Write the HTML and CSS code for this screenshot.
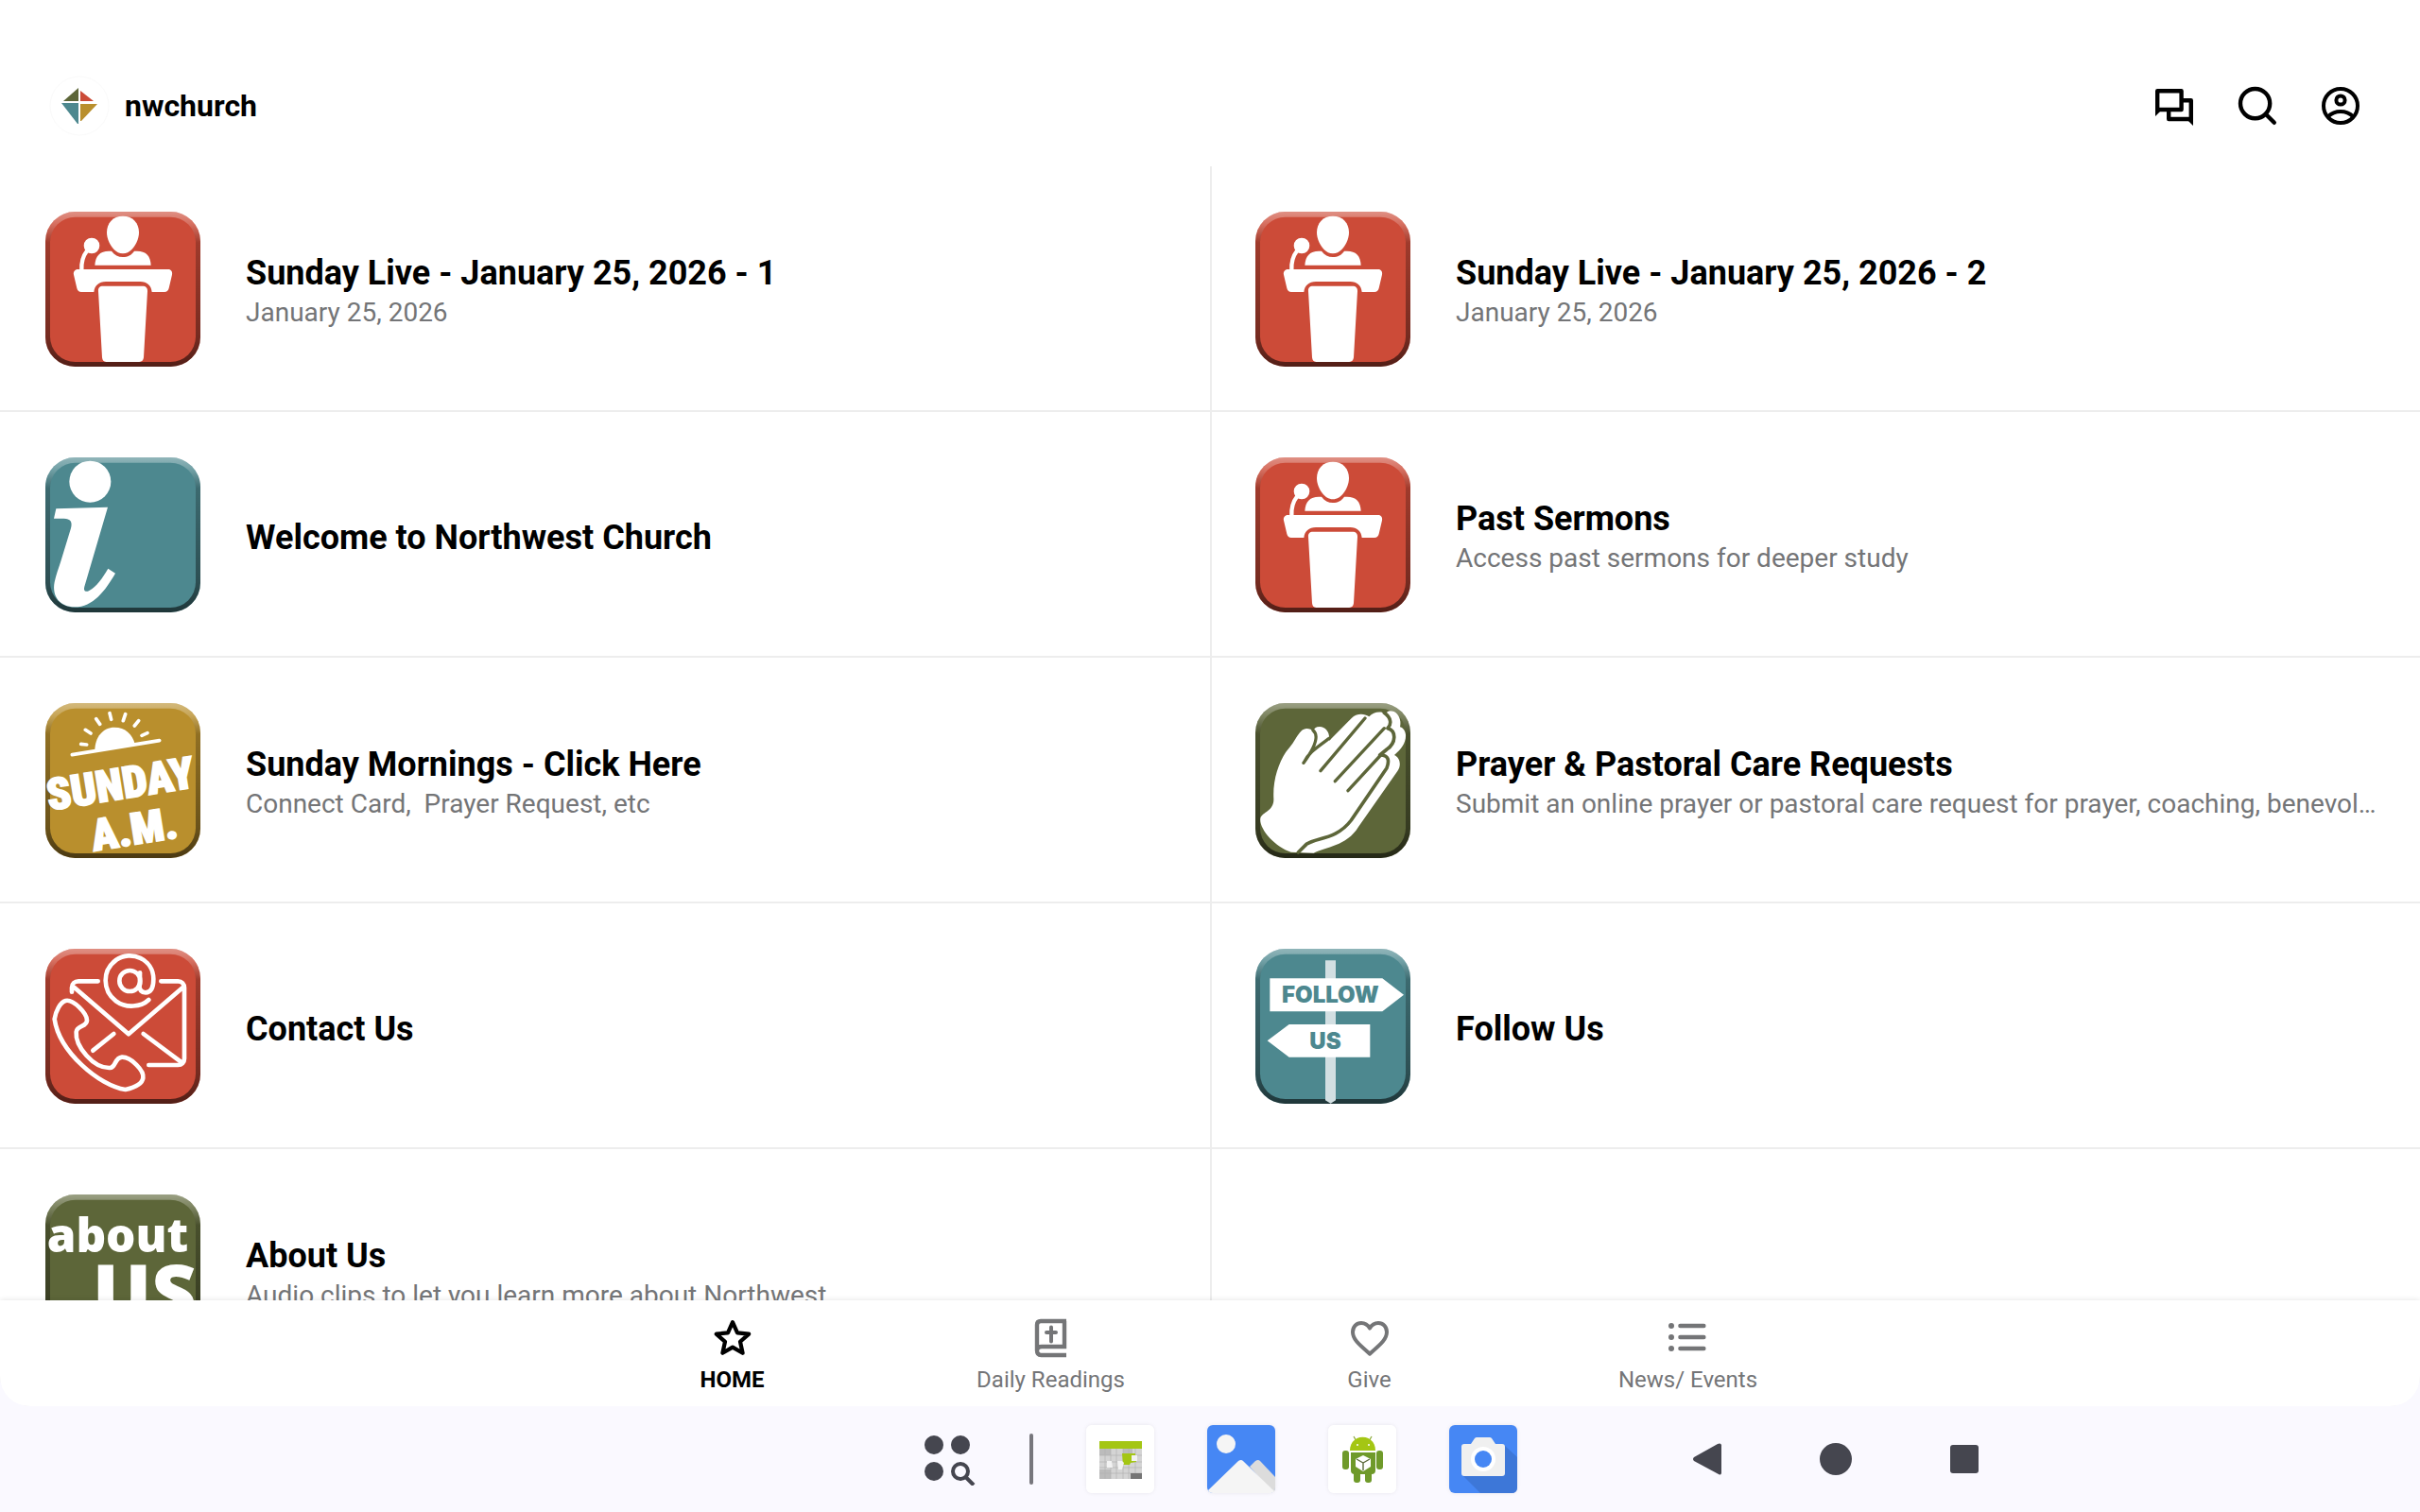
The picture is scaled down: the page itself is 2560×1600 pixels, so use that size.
FILE: index.html
```html
<!DOCTYPE html>
<html lang="en">
<head>
    <meta charset="UTF-8">
    <meta name="viewport" content="width=device-width, initial-scale=1.0">
    <title>nwchurch</title>
    <link rel="stylesheet" href="styles.css">
</head>
<body>
    <!-- Shared icon artwork -->
    <svg class="sprite" aria-hidden="true">
        <defs>
            <linearGradient id="bevel" x1="0" y1="0" x2="0" y2="1">
                <stop offset="0" stop-color="#fff" stop-opacity=".38"/>
                <stop offset=".08" stop-color="#fff" stop-opacity=".2"/>
                <stop offset=".2" stop-color="#000" stop-opacity=".22"/>
                <stop offset=".8" stop-color="#000" stop-opacity=".42"/>
                <stop offset="1" stop-color="#000" stop-opacity=".6"/>
            </linearGradient>
        </defs>
        <symbol id="tile" viewBox="0 0 492 492">
            <rect width="492" height="492" rx="94" fill="currentColor"/>
            <rect width="492" height="492" rx="94" fill="url(#bevel)"/>
            <rect x="15" y="17" width="462" height="460" rx="80" fill="currentColor"/>
        </symbol>
        <symbol id="podium" viewBox="54 72 492 492">
            <g fill="#fff">
                <path d="M300 86c32 0 51 22 51 52 0 28-22 67-51 67s-51-39-51-67c0-30 19-52 51-52z"/>
                <path d="M211 242c2-31 17-45 44-45h9c9 13 21 19 36 19s27-6 36-19h9c28 0 43 15 44 45z"/>
                <circle cx="201" cy="180" r="25"/>
                <path d="M157 255h287c9 0 14 8 12 17l-10 43c-2 8-7 12-14 12h-40c-2-21-15-33-37-33H246c-22 0-36 12-38 33h-40c-7 0-12-4-14-12l-10-43c-2-9 4-17 13-17z"/>
                <path d="M237 308h125c11 0 17 6 16 17l-12 210c-1 9-6 14-14 14H247c-8 0-12-5-13-14l-12-210c-1-11 4-17 15-17z"/>
            </g>
            <path d="M187 195c-14 18-20 36-18 64" fill="none" stroke="#fff" stroke-width="13"/>
        </symbol>
    </svg>

    <div class="app">
        <!-- Header -->
        <header class="header">
            <a href="#" class="brand">
                <svg class="brand-logo" viewBox="0 0 64 64" aria-hidden="true">
                    <circle cx="32" cy="32" r="31" fill="none" stroke="#fafafa"/>
                    <path d="M31 13v14H15z" fill="#5d6639"/>
                    <path d="M33 16l14 11H33z" fill="#cc4b38"/>
                    <path d="M13 29h18v22h-1z" fill="#4d888f"/>
                    <path d="M33 30h18L34 48h-1z" fill="#b98f2d"/>
                </svg>
                <h1 class="brand-name">nwchurch</h1>
            </a>
            <div class="header-actions">
                <button class="icon-btn" aria-label="Messages">
                    <svg viewBox="0 0 24 24" fill="none" stroke="#000" stroke-width="2.200"><path d="M3.100 4.100h12.700v9.900H3.100z" stroke-linejoin="round"/><path d="M16 9.100h4.900V19H9.100v-5" stroke-linejoin="round"/><path d="M2 14v3.500L5.500 14zM22 19v3.500L18.500 19z" fill="#000" stroke="none"/></svg>
                </button>
                <button class="icon-btn" aria-label="Search">
                    <svg viewBox="0 0 24 24"><circle cx="10.800" cy="10.800" r="7.800" fill="none" stroke="#000" stroke-width="2.200"/><path d="M16.400 16.400l4.500 4.500" fill="none" stroke="#000" stroke-width="2.200" stroke-linecap="round"/></svg>
                </button>
                <button class="icon-btn" aria-label="Account">
                    <svg viewBox="0 0 24 24" fill="none" stroke="#000" stroke-width="2"><circle cx="12" cy="12" r="9"/><circle cx="12" cy="9" r="2.300"/><path d="M5.400 17.600c3.600-3.500 9.600-3.500 13.200 0"/></svg>
                </button>
            </div>
        </header>

        <!-- Content list -->
        <main class="list">
            <a href="#" class="item">
                <svg class="item-icon red" aria-hidden="true"><use href="#tile"/><use href="#podium"/></svg>
                <div class="item-text">
                    <h2 class="item-title">Sunday Live - January 25, 2026 - 1</h2>
                    <p class="item-subtitle">January 25, 2026</p>
                </div>
            </a>
            <a href="#" class="item">
                <svg class="item-icon red" aria-hidden="true"><use href="#tile"/><use href="#podium"/></svg>
                <div class="item-text">
                    <h2 class="item-title">Sunday Live - January 25, 2026 - 2</h2>
                    <p class="item-subtitle">January 25, 2026</p>
                </div>
            </a>
            <a href="#" class="item">
                <svg class="item-icon teal" viewBox="0 0 492 492" aria-hidden="true">
                    <use href="#tile"/>
                    <g transform="translate(-54 -42)" fill="#fff">
                        <circle cx="196" cy="119" r="66"/>
                        <path d="M88 205l164-5-74 252c-4 14 4 19 15 13 24-13 42-40 60-70l23 15c-32 55-70 107-129 107-46 0-73-33-64-79 5-23 12-41 19-63l33-108c6-21-2-31-22-31H81z"/>
                    </g>
                </svg>
                <div class="item-text">
                    <h2 class="item-title">Welcome to Northwest Church</h2>
                </div>
            </a>
            <a href="#" class="item">
                <svg class="item-icon red" aria-hidden="true"><use href="#tile"/><use href="#podium"/></svg>
                <div class="item-text">
                    <h2 class="item-title">Past Sermons</h2>
                    <p class="item-subtitle">Access past sermons for deeper study</p>
                </div>
            </a>
            <a href="#" class="item">
                <svg class="item-icon gold" viewBox="0 0 492 492" aria-hidden="true">
                    <use href="#tile"/>
                    <g transform="translate(-54 -42)" fill="#fff">
                        <path d="M211 192c0-42 26-73 62-73 35 0 57 22 65 52z"/>
                        <path d="M139 206l277-45M167 172l18 2M181 127l17 11M215 92l12 17M258 74l5 20M308 77l-7 21M350 98l-13 16M378 137l-18 8" fill="none" stroke="#fff" stroke-width="11" stroke-linecap="round"/>
                        <text class="sunday-word" transform="translate(66 383) rotate(-9)">SUNDAY</text>
                        <text class="sunday-word" transform="translate(207 512) rotate(-9)">A.M.</text>
                    </g>
                </svg>
                <div class="item-text">
                    <h2 class="item-title">Sunday Mornings - Click Here</h2>
                    <p class="item-subtitle">Connect Card,&nbsp; Prayer Request, etc</p>
                </div>
            </a>
            <a href="#" class="item">
                <svg class="item-icon olive" viewBox="0 0 492 492" aria-hidden="true">
                    <use href="#tile"/>
                    <g transform="translate(-54 -42)">
                        <path d="M217 123c-26 1-31 37-66 74-25 38-42 92-39 148 2 40-35 42-42 62-6 33 46 92 97 108l34 2 38 1c38-20 104-21 142-83l124-177c12-17 10-41-10-51 24-20 38-42 36-65-2-15-10-22-18-24 6-29-10-51-31-51-7 0-10 3-14 9-17-10-40-6-53 9-17-12-42-10-55 4l-72 73c4-25-10-45-30-45-12 0-18 5-20 14-5-5-12-8-21-8z" fill="#fff"/>
                        <path d="M237 128c20 17 6 55-30 104M207 232c14-30 32-42 81-78M402 90L261 257M463 122L307 290M452 207L348 320" fill="none" stroke="currentColor" stroke-width="10" stroke-linecap="round"/>
                        <path d="M463 73c22 15 24 36 11 49 28 8 27 47-3 67l-22 18c28-1 31 17 22 41L358 414c-47 62-109 54-142 76l-26 26" fill="none" stroke="currentColor" stroke-width="11" stroke-linecap="round" stroke-linejoin="round"/>
                    </g>
                </svg>
                <div class="item-text">
                    <h2 class="item-title">Prayer &amp; Pastoral Care Requests</h2>
                    <p class="item-subtitle">Submit an online prayer or pastoral care request for prayer, coaching, benevolence</p>
                </div>
            </a>
            <a href="#" class="item">
                <svg class="item-icon red" viewBox="0 0 492 492" aria-hidden="true">
                    <use href="#tile"/>
                    <g transform="translate(-54 -42)" fill="none" stroke="#fff" stroke-width="14" stroke-linecap="round" stroke-linejoin="round">
                        <path d="M382 204c-24 23-72 28-104 4-44-34-44-98 0-130 48-34 119-3 119 60 0 28-9 43-25 43-14 0-20-9-20-24"/>
                        <circle cx="322" cy="144" r="33"/>
                        <path d="M354 118v38"/>
                        <path d="M221 145h-62c-12 0-21 9-21 20v14M421 145h54c12 0 20 9 20 21v225c0 12-8 20-20 20h-93M146 165l172 148 172-148M271 312l-66 53M365 312l122 91"/>
                        <path d="M83 265c4-26 18-53 35-58 25-6 68 41 68 62 0 22-32 15-34 37-4 46 55 116 107 114 19-1 14-32 38-34 28-1 71 42 67 66-3 23-38 33-56 37-83-12-210-120-225-224z"/>
                    </g>
                </svg>
                <div class="item-text">
                    <h2 class="item-title">Contact Us</h2>
                </div>
            </a>
            <a href="#" class="item">
                <svg class="item-icon teal" viewBox="0 0 492 492" aria-hidden="true">
                    <use href="#tile"/>
                    <g transform="translate(-54 -42)">
                        <path d="M276 79h33v444l-16 10-17-10z" fill="#d2dfe2"/>
                        <path d="M100 136h357l68 52-68 53H100zM418 282H161l-69 52 69 52h257z" fill="#fff"/>
                        <text class="sign-word" x="292" y="214">FOLLOW</text>
                        <text class="sign-word" x="276" y="359">US</text>
                    </g>
                </svg>
                <div class="item-text">
                    <h2 class="item-title">Follow Us</h2>
                </div>
            </a>
            <a href="#" class="item">
                <svg class="item-icon olive" viewBox="0 0 492 492" aria-hidden="true">
                    <use href="#tile"/>
                    <text class="about-word" x="5" y="182">about</text>
                    <text class="us-word" x="480" y="402">US</text>
                </svg>
                <div class="item-text">
                    <h2 class="item-title">About Us</h2>
                    <p class="item-subtitle">Audio clips to let you learn more about Northwest</p>
                </div>
            </a>
            <div class="item"></div>
        </main>

        <!-- Tabs -->
        <nav class="tabs">
            <a href="#" class="tab active">
                <svg class="tab-icon" viewBox="0 0 24 24" aria-hidden="true"><path d="M12 3.600l2.500 5.600 6.100.600-4.600 4.100 1.300 6L12 16.800l-5.300 3.100 1.300-6-4.600-4.100 6.100-.600z" fill="none" stroke="currentColor" stroke-width="2.100" stroke-linejoin="round"/></svg>
                <span>HOME</span>
            </a>
            <a href="#" class="tab">
                <svg class="tab-icon" viewBox="0 0 24 24" aria-hidden="true"><path d="M20 3H6.500C5.100 3 4.500 3.800 4.500 5v13.500C4.500 20.200 5.300 21 6.700 21H20M19 3v13.500H7c-1.500 0-2.500.700-2.500 2" fill="none" stroke="currentColor" stroke-width="2.200"/><path d="M12 6.300v7.400M9.500 9h5" fill="none" stroke="currentColor" stroke-width="2" stroke-linecap="round"/></svg>
                <span>Daily Readings</span>
            </a>
            <a href="#" class="tab">
                <svg class="tab-icon" viewBox="0 0 24 24" aria-hidden="true"><path d="M12 20.300C5.500 14.800 3 12.300 3 8.800 3 6 5 4 7.500 4c1.800 0 3.500 1 4.500 2.800C13 5 14.700 4 16.500 4 19 4 21 6 21 8.800c0 3.500-2.500 6-9 11.500z" fill="none" stroke="currentColor" stroke-width="2" stroke-linejoin="round"/></svg>
                <span>Give</span>
            </a>
            <a href="#" class="tab">
                <svg class="tab-icon" viewBox="0 0 24 24" aria-hidden="true"><path d="M7.700 5.500h12.500M7.700 11.500h12.500M7.700 17.500h12.500" fill="none" stroke="currentColor" stroke-width="2.200" stroke-linecap="round"/><g fill="currentColor"><circle cx="3" cy="5.500" r="1.500"/><circle cx="3" cy="11.500" r="1.500"/><circle cx="3" cy="17.500" r="1.500"/></g></svg>
                <span>News/ Events</span>
            </a>
        </nav>
    </div>

    <!-- System taskbar -->
    <footer class="taskbar">
        <div class="dock">
            <button class="dock-launcher" aria-label="All apps">
                <svg viewBox="0 0 56 56"><g fill="#45464f"><circle cx="11" cy="13" r="10"/><circle cx="39" cy="13" r="10"/><circle cx="11" cy="41" r="10"/></g><circle cx="39" cy="41" r="8" fill="none" stroke="#45464f" stroke-width="4"/><path d="M44 46.500l9 9" stroke="#45464f" stroke-width="4"/></svg>
            </button>
            <span class="dock-divider"></span>
            <button class="dock-app" aria-label="Calendar">
                <svg viewBox="0 0 72 72">
                    <rect width="72" height="72" rx="6" fill="#fff"/>
                    <rect x="14" y="17" width="45" height="40" fill="#d4d4d4"/>
                    <rect x="14" y="17" width="45" height="8" fill="#a4c614"/>
                    <path d="M14 25h12v7H14zM39 25h10v6H39zM14 47h12v10H14z" fill="#bcbcbc"/>
                    <path d="M14 32h45M14 39h45M14 45h45M14 51h45M20 25v32M26 25v32M32 25v32M39 25v32M45 25v32M52 25v32" stroke="#b2b2b2" stroke-width=".700"/>
                    <path d="M47 51h12v6H47z" fill="#757575"/>
                    <path d="M38 30h14v2l1 7-6 1-1 2h-7z" fill="#a4c614"/>
                    <path d="M48 32h6v6h-6zM22 38h5l1 7h-6zM33 38h5l2 2-2 7h-4z" fill="#f2f2f2"/>
                </svg>
            </button>
            <button class="dock-app" aria-label="Gallery">
                <svg viewBox="0 0 72 72">
                    <rect width="72" height="72" rx="6" fill="#4687f4"/>
                    <circle cx="20" cy="20" r="10" fill="#f5f5f5"/>
                    <path d="M45 44l6-6q3-2 5 0l16 17v11q0 6-4 4z" fill="#dcdcdc"/>
                    <path d="M1 69l32-31q3-2 5 0l33 32q-1 2-5 2H6q-4 0-5-3z" fill="#f5f5f5"/>
                </svg>
            </button>
            <button class="dock-app" aria-label="Android app">
                <svg viewBox="0 0 72 72">
                    <rect width="72" height="72" rx="6" fill="#fff"/>
                    <path d="M27 12l4 7M46 12l-4 7" stroke="#8aa83a" stroke-width="1.200"/>
                    <path d="M23 27c0-19 27-19 27 0z" fill="#a4c614"/>
                    <g fill="#6f9a2a">
                        <path d="M24 29h26v19q0 4-4 4H28q-4 0-4-4z"/>
                        <rect x="15" y="27" width="7" height="20" rx="3"/>
                        <rect x="51" y="27" width="7" height="20" rx="3"/>
                        <rect x="27" y="49" width="7" height="12" rx="3"/>
                        <rect x="39" y="49" width="7" height="12" rx="3"/>
                    </g>
                    <circle cx="31" cy="21" r="1" fill="#fff"/>
                    <circle cx="43" cy="21" r="1" fill="#fff"/>
                    <path d="M37 32l8 4v8l-8 5-8-5v-8z" fill="#fff"/>
                    <path d="M30 36l7 4 7-4M37 40v8" fill="none" stroke="#5c6b3c" stroke-width="1.400"/>
                </svg>
            </button>
            <button class="dock-app" aria-label="Camera">
                <svg viewBox="0 0 72 72">
                    <rect width="72" height="72" rx="6" fill="#4687f4"/>
                    <path d="M58 21l14 13v32q0 6-6 6H33L15 54z" fill="#3d77d8"/>
                    <path d="M16 20h7l4-6q1-1 2-1h14q1 0 2 1l4 6h7q3 0 3 3v28q0 3-3 3H16q-3 0-3-3V23q0-3 3-3z" fill="#f0f0f0"/>
                    <circle cx="36" cy="36" r="13" fill="#fff"/>
                    <circle cx="36" cy="36" r="9" fill="#4687f4"/>
                </svg>
            </button>
        </div>
        <div class="system-nav">
            <button class="nav-btn" aria-label="Back"><svg viewBox="0 0 48 48"><path d="M37 7.500q2 0 2 2v29q0 3-3 1.500L10 26q-2-2 0-4L35 8z"/></svg></button>
            <button class="nav-btn" aria-label="Home"><svg viewBox="0 0 48 48"><circle cx="24" cy="24" r="17"/></svg></button>
            <button class="nav-btn" aria-label="Recents"><svg viewBox="0 0 48 48"><rect x="9" y="9" width="30" height="30" rx="3"/></svg></button>
        </div>
    </footer>
</body>
</html>
```
FILE: styles.css
```css
:root {
    --text-color: #000;
    --muted-color: #747577;
    --line-color: #ededed;
    --taskbar-color: #faf9ff;
    --system-icon: #45464f;
    --white: #fff;
}

* {
    margin: 0;
    padding: 0;
    box-sizing: border-box;
    font-family: Roboto, 'Noto Sans', sans-serif;
}

body {
    display: flex;
    flex-direction: column;
    height: 100vh;
    background-color: var(--taskbar-color);
    color: var(--text-color);
}

a {
    color: inherit;
    text-decoration: none;
}

button {
    border: none;
    background: none;
    cursor: pointer;
}

svg {
    display: block;
}

.sprite {
    position: absolute;
    width: 0;
    height: 0;
}

.app {
    flex: 1;
    min-height: 0;
    display: flex;
    flex-direction: column;
    background-color: var(--white);
    border-radius: 0 0 32px 32px;
    overflow: hidden;
}

/* Header */
.header {
    display: flex;
    justify-content: space-between;
    align-items: center;
    padding: 80px 60px 32px 52px;
}

.brand {
    display: flex;
    align-items: center;
    gap: 16px;
}

.brand-logo {
    width: 64px;
    height: 64px;
}

.brand-name {
    font-size: 32px;
    font-weight: 700;
    line-height: 40px;
}

.header-actions {
    display: flex;
    gap: 40px;
}

.icon-btn,
.icon-btn svg {
    width: 48px;
    height: 48px;
}

/* List */
.list {
    flex: 1;
    min-height: 0;
    display: grid;
    grid-template-columns: 1fr 1fr;
    grid-auto-rows: 260px;
    overflow: hidden;
}

.item {
    display: flex;
    align-items: center;
    gap: 48px;
    min-width: 0;
    padding: 48px 44px 46px 48px;
    border-bottom: 2px solid var(--line-color);
}

.item:nth-child(even) {
    padding-left: 46px;
    border-left: 2px solid var(--line-color);
}

.item-icon {
    flex-shrink: 0;
    width: 164px;
    height: 164px;
}

.red {
    color: #cc4b38;
}

.teal {
    color: #4d888f;
}

.gold {
    color: #b98f2d;
}

.olive {
    color: #5d6639;
}

.item-text {
    min-width: 0;
    padding-top: 6px;
}

.item-title {
    font-size: 36px;
    font-weight: 700;
    line-height: 44px;
}

.item-subtitle {
    color: var(--muted-color);
    font-size: 28px;
    line-height: 40px;
    white-space: nowrap;
    overflow: hidden;
    text-overflow: ellipsis;
}

/* Lettering inside the tiles */
.sunday-word {
    font-family: 'Liberation Sans Narrow', 'Roboto Condensed', Roboto, sans-serif;
    font-size: 140px;
    font-weight: 900;
    stroke: #fff;
    stroke-width: 5px;
}

.sign-word {
    font-family: Inter, sans-serif;
    font-size: 72px;
    font-weight: 900;
    text-anchor: middle;
    fill: currentColor;
}

.about-word,
.us-word {
    font-family: 'Open Sans', sans-serif;
    font-weight: 800;
    fill: #fff;
}

.about-word {
    font-size: 148px;
}

.us-word {
    font-size: 248px;
    text-anchor: end;
}

/* Tabs */
.tabs {
    display: flex;
    justify-content: center;
    height: 112px;
    background-color: var(--white);
    box-shadow: 0 0 6px rgba(0, 0, 0, 0.12);
    z-index: 1;
}

.tab {
    display: flex;
    flex-direction: column;
    align-items: center;
    width: 337px;
    padding-top: 16px;
    color: var(--muted-color);
    font-size: 24px;
    line-height: 40px;
}

.tab.active {
    color: var(--text-color);
    font-weight: 700;
}

.tab-icon {
    width: 48px;
    height: 48px;
}

/* Taskbar */
.taskbar {
    display: flex;
    justify-content: flex-end;
    align-items: center;
    gap: 177px;
    height: 112px;
    padding-right: 17.9%;
}

.dock {
    display: flex;
    align-items: center;
    gap: 56px;
}

.dock-launcher,
.dock-launcher svg {
    width: 56px;
    height: 56px;
}

.dock-divider {
    width: 4px;
    height: 54px;
    border-radius: 2px;
    background-color: #77777d;
}

.dock-app {
    border-radius: 6px;
    box-shadow: 0 0 4px rgba(0, 0, 0, 0.08);
}

.dock-app,
.dock-app svg {
    width: 72px;
    height: 72px;
}

.system-nav {
    display: flex;
    gap: 88px;
}

.nav-btn,
.nav-btn svg {
    width: 48px;
    height: 48px;
    fill: var(--system-icon);
}
```
